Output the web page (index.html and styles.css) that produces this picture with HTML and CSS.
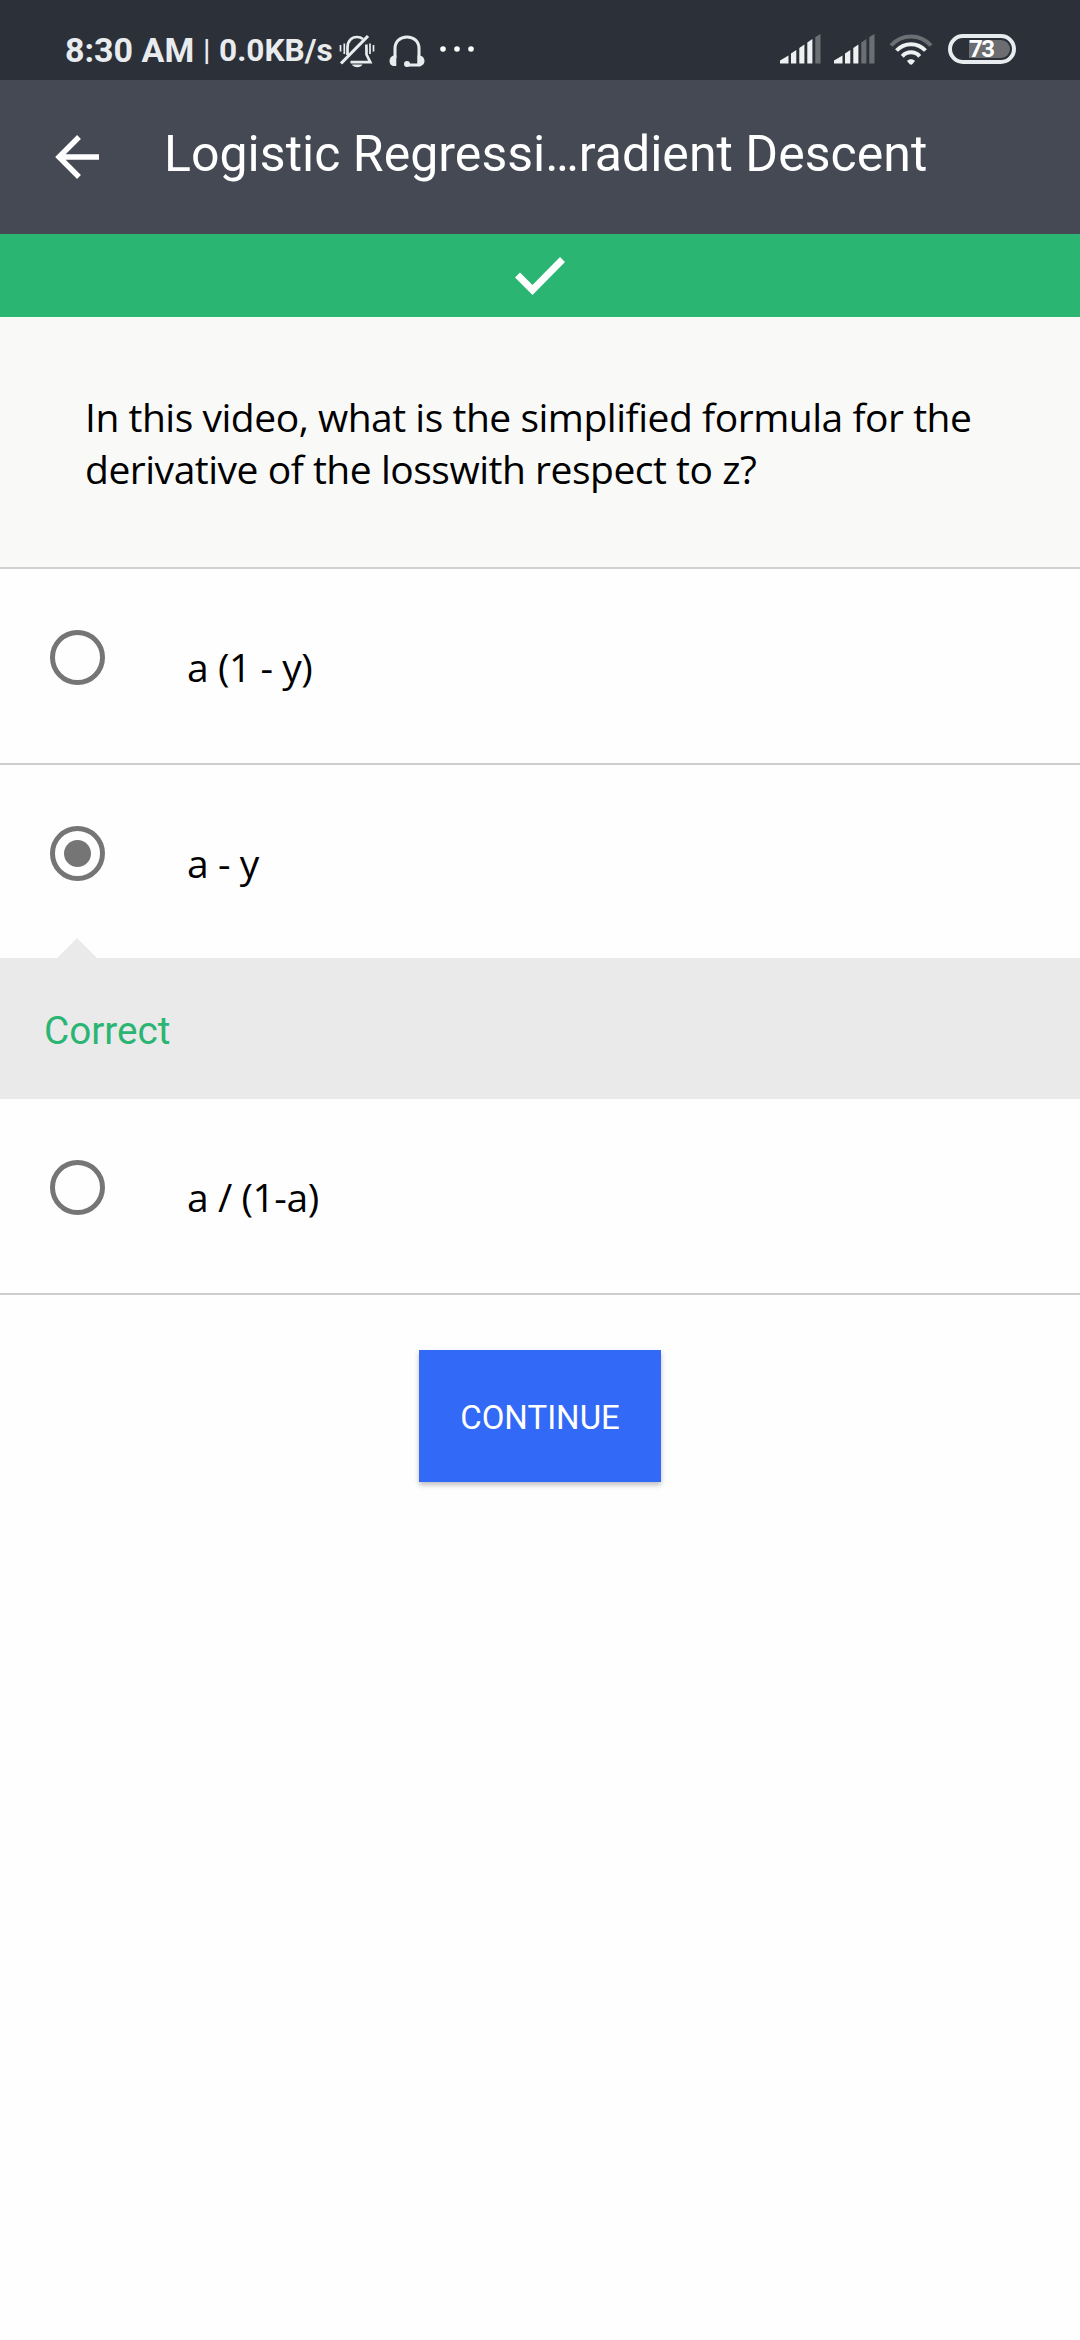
FILE: index.html
```html
<!DOCTYPE html>
<html lang="en">
<head>
<meta charset="utf-8">
<title>Logistic Regression Gradient Descent</title>
<link rel="stylesheet" href="styles.css">
</head>
<body>
<div class="status">
  <span class="clock">8:30 AM</span>
  <span class="bar">|</span>
  <span class="speed">0.0KB/s</span>
  <svg class="bell" width="36" height="34" viewBox="0 0 36 34" fill="none" stroke="#e9ecee">
    <path d="M8.5 21V13.5C8.5 7 12.5 3 18 3C20.5 3 22.5 3.8 24 5M27.3 10.5C27.5 12.5 27.5 17 27.5 20.5L31.3 28.2H11.5" stroke-width="2.7"/>
    <path d="M2 29.5L29 2" stroke-width="3.2"/>
    <path d="M1.5 11v6.5M5.3 9.5V20M31 9.5V20M34.5 11v6.5" stroke-width="1.7"/>
    <path d="M13 30.5H23.5C22 34 14.5 34 13 30.5Z" fill="#e9ecee" stroke="none"/>
  </svg>
  <svg class="headset" width="36" height="34" viewBox="0 0 36 34" fill="none" stroke="#e9ecee" stroke-width="3">
    <path d="M6 24V14.5C6 7.5 11 3 18 3S30 7.5 30 14.5V31H18"/>
    <path d="M7.3 21.5V32H5.5C2.5 32 .5 30 .5 27S2.5 22 4.5 21.5ZM28.5 21.5H31C34 22 35.5 24.5 35.5 27S33.5 32 31 32H28.5Z" fill="#e9ecee" stroke="none"/>
    <circle cx="18" cy="30" r="3" fill="#e9ecee" stroke="none"/>
  </svg>
  <svg class="dots" width="36" height="8" viewBox="0 0 36 8" fill="#fff"><circle cx="4" cy="4" r="2.8"/><circle cx="18" cy="4" r="2.8"/><circle cx="32" cy="4" r="2.8"/></svg>
  <svg class="signal" width="41" height="30" viewBox="0 0 41 30" fill="#eef0f1">
    <path d="M0 29.5V26.5L8.5 21.5V29.5ZM11 29.5V19.5L16.3 16V29.5ZM19.3 29.5V14L24.4 10.5V29.5ZM27.3 29.5V8.5L32.4 5V29.5Z"/>
    <path d="M35.3 29.5V3L40.5 0V29.5Z" fill="#6b6f74"/>
  </svg>
  <svg class="signal second" width="41" height="30" viewBox="0 0 41 30" fill="#eef0f1">
    <path d="M0 29.5V26.5L8.5 21.5V29.5ZM11 29.5V19.5L16.3 16V29.5ZM19.3 29.5V14L24.4 10.5V29.5Z"/>
    <path d="M27.3 29.5V8.5L32.4 5V29.5ZM35.3 29.5V3L40.5 0V29.5Z" fill="#6b6f74"/>
  </svg>
  <svg class="wifi" width="44" height="32" viewBox="0 0 44 32" fill="none" stroke="#eef0f1" stroke-width="4">
    <path d="M2 11.5C13 -.5 31 -.5 42 11.5" stroke="#6b6f74"/>
    <path d="M7.500 16.500C15.500 8 28.500 8 36.500 16.500M13.300 22.300C18 17 26 17 30.700 22.300"/>
    <path d="M18 27C20 24.500 24 24.500 26 27L23.500 30Q22 31.500 20.500 30Z" fill="#eef0f1" stroke="none"/>
  </svg>
  <span class="battery"><span class="level">73</span></span>
</div>
<header class="header">
  <svg class="back" width="44" height="44" viewBox="0 0 44 44" fill="none" stroke="#fff" stroke-width="5.4"><path d="M44 22H5M24 2L4 22L24 42"/></svg>
  <h1 class="title">Logistic Regressi…radient Descent</h1>
</header>
<div class="result">
  <svg width="50" height="40" viewBox="0 0 50 40" fill="none" stroke="#fff" stroke-width="7"><path d="M2.500 19L17.500 34L47.500 3.500"/></svg>
</div>
<main>
  <p class="question">In this video, what is the simplified formula for the<br>derivative of the losswith respect to z?</p>
  <div class="option"><span class="radio"></span><span class="answer">a (1 - y)</span></div>
  <div class="option chosen"><span class="radio"></span><span class="answer">a - y</span></div>
  <div class="feedback">Correct</div>
  <div class="option"><span class="radio"></span><span class="answer">a / (1-a)</span></div>
  <button class="continue">CONTINUE</button>
</main>
</body>
</html>
```
FILE: styles.css
```css
* { box-sizing: border-box; }
body {
  margin: 0;
  min-height: 2340px;
  background: #fefefe;
  color: #000;
  font-family: Roboto, sans-serif;
}
svg { display: block; flex: none; }
.status {
  display: flex;
  align-items: flex-start;
  height: 80px;
  padding: 34px 0 0 65px;
  background: #2c3038;
  color: #e9ecee;
  white-space: nowrap;
}
.clock { width: 138px; font-size: 34px; font-weight: 700; line-height: 32px; }
.bar { width: 16px; font-size: 30px; font-weight: 500; line-height: 32px; }
.speed { width: 120px; font-size: 31.6px; font-weight: 700; line-height: 34px; }
.headset { margin-left: 14px; }
.dots { margin: 11px 0 0 14px; }
.signal { margin-left: 305px; }
.signal.second { margin-left: 13px; }
.wifi { margin-left: 14px; }
.battery {
  display: flex;
  width: 68px;
  height: 30px;
  margin-left: 15px;
  padding: 2px 2px 2px 17px;
  border: 4px solid #e9ecee;
  border-radius: 15px;
}
.level {
  width: 41px;
  border-radius: 0 9px 9px 0;
  background: #6b6d71;
  color: #fff;
  font-size: 24px;
  font-weight: 700;
  letter-spacing: -1.5px;
  line-height: 18px;
}
.header {
  display: flex;
  align-items: center;
  gap: 65px;
  height: 154px;
  padding: 0 0 0 55px;
  background: #444953;
}
.title {
  margin: 0 0 6px;
  color: #fff;
  font-size: 50px;
  font-weight: 400;
  letter-spacing: .03px;
  line-height: 60px;
  white-space: nowrap;
}
.result {
  display: flex;
  justify-content: center;
  align-items: center;
  height: 83px;
  background: #2bb573;
}
.question {
  height: 252px;
  margin: 0;
  padding: 74px 0 0 85px;
  border-bottom: 2px solid #d0d1d1;
  background: #f9f9f8;
  font: 39px/52px "Open Sans", sans-serif;
  letter-spacing: -.48px;
  white-space: nowrap;
}
.option {
  display: flex;
  align-items: flex-start;
  gap: 82px;
  height: 196px;
  padding: 61px 0 0 50px;
  border-bottom: 2px solid #cdcdcd;
}
.option.chosen { height: 193px; border-bottom: 0; }
.radio {
  display: flex;
  width: 55px;
  height: 55px;
  border: 5px solid #757575;
  border-radius: 50%;
}
.chosen .radio::before {
  content: "";
  width: 27px;
  height: 27px;
  margin: auto;
  border-radius: 50%;
  background: #757575;
}
.answer {
  padding-top: 11px;
  font: 39px/52px "Open Sans", sans-serif;
  letter-spacing: -.45px;
}
.feedback {
  position: relative;
  height: 141px;
  padding: 0 0 0 44px;
  background: #eaeaea;
  color: #2bb573;
  font-size: 38.7px;
  line-height: 146px;
}
.feedback::before {
  content: "";
  position: absolute;
  left: 57px;
  bottom: 100%;
  border: solid transparent;
  border-width: 0 20px 20px;
  border-bottom-color: #eaeaea;
}
.continue {
  display: block;
  width: 242px;
  height: 132px;
  margin: 55px auto 0;
  padding: 3px 0 0;
  border: 0;
  background: #3269f6;
  box-shadow: 0 3px 5px rgba(0, 0, 0, .25);
  color: #fff;
  font: 33px Roboto, sans-serif;
}
```
